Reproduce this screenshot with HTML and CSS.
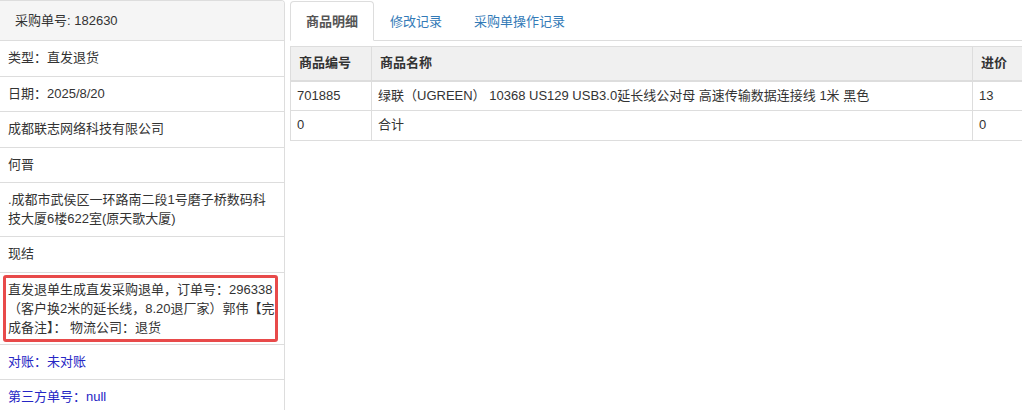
FILE: index.html
```html
<!DOCTYPE html>
<html lang="zh-CN">
<head>
  <meta charset="UTF-8">
  <title>采购单详情</title>
  <link rel="stylesheet" href="styles.css">
</head>
<body>
  <div class="page">
    <!-- Order info panel -->
    <div class="panel">
      <div class="panel-heading">采购单号: 182630</div>
      <ul class="info-list">
        <li>类型：直发退货</li>
        <li>日期：2025/8/20</li>
        <li>成都联志网络科技有限公司</li>
        <li>何晋</li>
        <li>.成都市武侯区一环路南二段1号磨子桥数码科技大厦6楼622室(原天歌大厦)</li>
        <li>现结</li>
        <li class="remark-item">
          <div class="remark">直发退单生成直发采购退单，订单号：296338（客户换2米的延长线，8.20退厂家）郭伟【完成备注】： 物流公司：退货</div>
        </li>
        <li class="blue">对账：未对账</li>
        <li class="blue">第三方单号：null</li>
      </ul>
    </div>

    <!-- Tabs and goods table -->
    <div class="main">
      <ul class="tabs">
        <li class="active">商品明细</li>
        <li>修改记录</li>
        <li>采购单操作记录</li>
      </ul>
      <table class="goods">
        <thead>
          <tr>
            <th class="col-code">商品编号</th>
            <th class="col-name">商品名称</th>
            <th>进价</th>
          </tr>
        </thead>
        <tbody>
          <tr>
            <td>701885</td>
            <td>绿联（UGREEN） 10368 US129 USB3.0延长线公对母 高速传输数据连接线 1米 黑色</td>
            <td>13</td>
          </tr>
          <tr>
            <td>0</td>
            <td>合计</td>
            <td>0</td>
          </tr>
        </tbody>
      </table>
    </div>
  </div>
</body>
</html>
```

FILE: styles.css
```css
/* General Styles */
body {
  margin: 0;
  font-family: 'Liberation Sans', Arial, 'Noto Sans CJK SC', sans-serif;
  font-size: 13px;
  color: #333;
  background: #fff;
  overflow: hidden;
}

.page {
  display: grid;
  grid-template-columns: 285px 1fr;
  align-items: start;
  gap: 5px;
  height: 410px;
  overflow: hidden;
}

/* Left panel */
.panel {
  border: 1px solid #ddd;
  border-left: none;
  border-radius: 0 4px 0 0;
  overflow: hidden;
}

.panel-heading {
  height: 39px;
  line-height: 39px;
  padding-left: 15px;
  background-color: #f5f5f5;
  border-bottom: 1px solid #ddd;
}

.info-list {
  list-style: none;
  margin: 0;
  padding: 0;
}

.info-list li {
  padding: 8px 8px;
  line-height: 18.5px;
  border-bottom: 1px solid #ddd;
}

.info-list li:last-child {
  padding-bottom: 12px;
}

.info-list li.remark-item {
  padding: 2px 6px 2px 3px;
}

.remark {
  border: 3px solid #e84a4a;
  border-radius: 3px;
  padding: 2px 0 2px 2px;
  line-height: 19px;
}

.info-list li.blue {
  color: #2626c4;
}

/* Tabs */
.main {
  overflow: hidden;
}

.tabs {
  display: flex;
  list-style: none;
  margin: 0;
  padding: 0;
  height: 40px;
  border-bottom: 1px solid #ddd;
}

.tabs li {
  padding: 0 15px;
  line-height: 39px;
  margin-top: 1px;
  color: #337ab7;
  border: 1px solid transparent;
  border-radius: 4px 4px 0 0;
}

.tabs li.active {
  color: #555;
  font-weight: bold;
  background: #fff;
  border-color: #ddd #ddd transparent;
  margin-bottom: -1px;
}

/* Goods table */
.goods {
  width: 760px;
  margin-top: 5px;
  border-collapse: collapse;
  table-layout: fixed;
}

.goods th,
.goods td {
  border: 1px solid #ddd;
  padding: 5px 6px;
  line-height: 18.5px;
  text-align: left;
  white-space: nowrap;
}

.goods th {
  padding: 7px 8px;
  background-color: #f0f0f0;
  border-bottom-width: 2px;
}

.col-code {
  width: 64px;
}

.col-name {
  width: 584px;
}
```
